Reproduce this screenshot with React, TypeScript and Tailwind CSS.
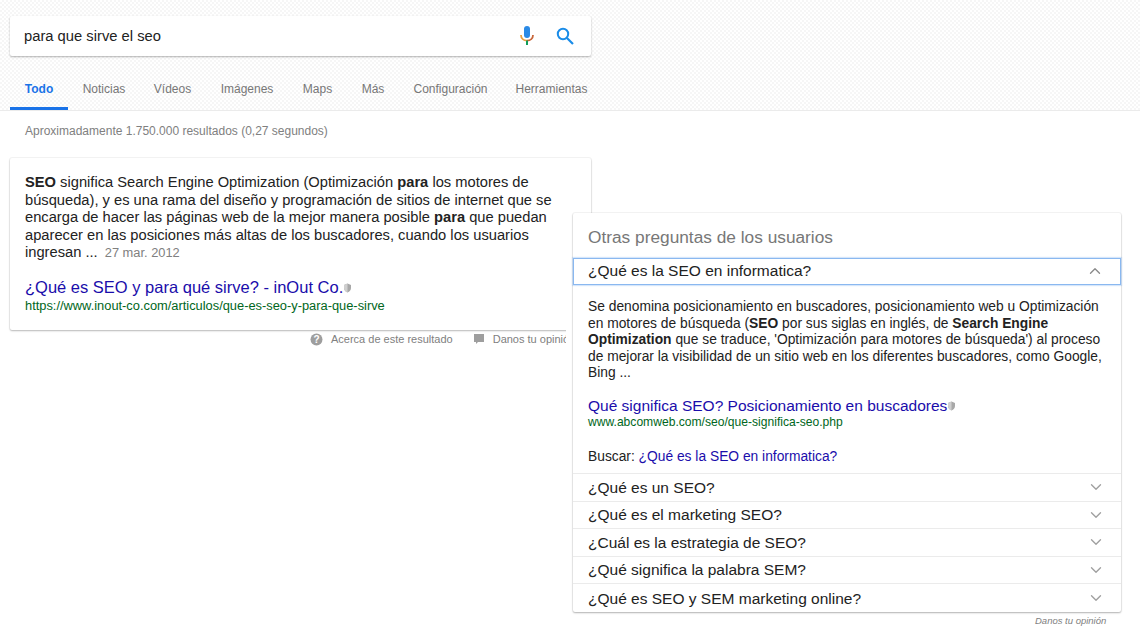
import React from "react";
import { ChevronDown, ChevronUp } from "lucide-react";

const font = "font-['Liberation_Sans',Arial,sans-serif]";

const tabs: [string, string][] = [
  ["Noticias", "w-[72px]"],
  ["Vídeos", "w-[65px]"],
  ["Imágenes", "w-[84px]"],
  ["Maps", "w-[57px]"],
  ["Más", "w-[54px]"],
  ["Configuración", "w-[101px]"],
  ["Herramientas", "w-[101px]"],
];

const questions = [
  "¿Qué es un SEO?",
  "¿Qué es el marketing SEO?",
  "¿Cuál es la estrategia de SEO?",
  "¿Qué significa la palabra SEM?",
  "¿Qué es SEO y SEM marketing online?",
];

function Shield() {
  return (
    <svg width="9" height="10" viewBox="0 0 9 10" className="inline-block align-baseline">
      <path d="M4.5 0.5 8 2v3c0 2.2-1.5 3.7-3.5 4.5C2.5 8.7 1 7.2 1 5V2z" fill="#a8a8a8" />
      <path d="M4.5 0.5 1 2v3c0 2.2 1.5 3.7 3.5 4.5z" fill="#cfcfcf" />
    </svg>
  );
}

export default function App() {
  return (
    <div className={`relative w-[1140px] h-[642px] overflow-hidden bg-white ${font}`}>
      <header className="h-[111px] bg-[conic-gradient(#f6f6f6_25%,#ffffff_0_50%,#f6f6f6_0_75%,#ffffff_0)] bg-[length:4px_4px] border-b border-[#ebebeb] pt-[16px] pl-[10px]">
        <div className="w-[581px] h-[40px] bg-white rounded-[2px] shadow-[0_1px_2px_rgba(0,0,0,0.3)] flex items-center pl-[14px] pr-[17px]">
          <span className="flex-1 text-[14.75px] text-[#222]">para que sirve el seo</span>
          <svg width="16" height="22" viewBox="0 0 16 22" className="mr-[21px]">
            <rect x="5" y="1" width="6" height="12" rx="3" fill="#2a8ae6" />
            <path d="M2 10c0 3.6 2.6 5.6 6 5.6" fill="none" stroke="#e8a040" strokeWidth="1.8" />
            <path d="M14 10c0 3.6-2.6 5.6-6 5.6" fill="none" stroke="#c8663a" strokeWidth="1.8" />
            <path d="M8 15.5V20" stroke="#0f9d58" strokeWidth="2" />
          </svg>
          <svg width="18" height="18" viewBox="0 0 18 18">
            <circle cx="7" cy="7" r="5.2" fill="none" stroke="#1a8ce8" strokeWidth="2" />
            <path d="M11 11l6 6" stroke="#1a8ce8" strokeWidth="2.2" />
          </svg>
        </div>
        <nav className="flex h-[54px] text-[12px] text-[#777]">
          <div className="w-[58px] h-[54px] flex items-center justify-center font-bold text-[#1a73e8] border-b-[3px] border-[#1a73e8] pt-[14px]">
            Todo
          </div>
          {tabs.map(([t, w]) => (
            <div key={t} className={`${w} flex items-center justify-center h-[54px] pt-[11px]`}>
              {t}
            </div>
          ))}
        </nav>
      </header>

      <main className="pl-[10px]">
        <p className="pl-[15px] pt-[12px] text-[12px] leading-[16px] text-[#808080]">
          Aproximadamente 1.750.000 resultados (0,27 segundos)
        </p>
        <section className="mt-[19px] w-[581px] h-[172px] bg-white rounded-[2px] shadow-[0_1px_2px_rgba(0,0,0,0.25),0_0_0_1px_rgba(0,0,0,0.04)] pl-[15px] pt-[16px] text-[14.7px] leading-[17.5px] text-[#222]">
          <p>
            <b>SEO</b> significa Search Engine Optimization (Optimización <b>para</b> los motores de
            <br />
            búsqueda), y es una rama del diseño y programación de sitios de internet que se
            <br />
            encarga de hacer las páginas web de la mejor manera posible <b>para</b> que puedan
            <br />
            aparecer en las posiciones más altas de los buscadores, cuando los usuarios
            <br />
            ingresan ... <span className="ml-[3px] text-[12.85px] text-[#808080]">27 mar. 2012</span>
          </p>
          <a className="block mt-[15px] text-[16.5px] leading-[20px] text-[#1a0dab]">
            ¿Qué es SEO y para qué sirve? - inOut Co.
            <Shield />
          </a>
          <p className="mt-[1px] text-[12.85px] leading-[16px] text-[#006621]">
            https://www.inout-co.com/articulos/que-es-seo-y-para-que-sirve
          </p>
        </section>
        <div className="w-[581px] mt-[1px] flex pl-[300px] items-center text-[11px] leading-[16px] text-[#808080] whitespace-nowrap">
          <svg width="13" height="13" viewBox="0 0 13 13" className="shrink-0 mr-[8px]">
            <circle cx="6.5" cy="6.5" r="6" fill="#9e9e9e" />
            <text x="6.5" y="10" textAnchor="middle" fontSize="10" fontWeight="700" fill="#fff" fontFamily="Liberation Sans">?</text>
          </svg>
          <span>Acerca de este resultado</span>
          <svg width="12" height="12" viewBox="0 0 12 12" className="shrink-0 ml-[20px] mr-[8px]">
            <path d="M1 1h10v8H5l-2 2V9H1z" fill="#9e9e9e" />
          </svg>
          <span>Danos tu opinión</span>
        </div>
      </main>

      <div className="absolute left-[566px] top-[213px] pl-[7px] bg-white">
        <aside className="w-[548px] bg-white rounded-[2px] shadow-[0_1px_2px_rgba(0,0,0,0.28),0_0_0_1px_rgba(0,0,0,0.04)]">
          <h3 className="h-[45px] pl-[15px] pt-[14px] text-[17.3px] leading-[20px] text-[#777]">
            Otras preguntas de los usuarios
          </h3>
          <div className="h-[27px] flex items-center justify-between pl-[14px] pr-[16px] pb-[2px] border border-[#8ab8f0] shadow-[0_0_1px_1px_rgba(138,184,240,0.35)] text-[15.5px] text-[#222]">
            <span>¿Qué es la SEO en informatica?</span>
            <ChevronUp size={18} strokeWidth={1.8} color="#8a8a8a" />
          </div>
          <div className="pl-[15px] pr-[10px] pt-[14px] text-[13.8px] leading-[16.5px] text-[#222] border-b border-[#ebebeb] h-[189px]">
            <p>
              Se denomina posicionamiento en buscadores, posicionamiento web u Optimización
              <br />
              en motores de búsqueda (<b>SEO</b> por sus siglas en inglés, de <b>Search Engine</b>
              <br />
              <b>Optimization</b> que se traduce, 'Optimización para motores de búsqueda') al proceso
              <br />
              de mejorar la visibilidad de un sitio web en los diferentes buscadores, como Google,
              <br />
              Bing ...
            </p>
            <a className="block mt-[15px] text-[15.5px] leading-[17px] text-[#1a0dab]">
              Qué significa SEO? Posicionamiento en buscadores
              <Shield />
            </a>
            <p className="mt-[1px] text-[12.1px] leading-[15px] text-[#006621]">www.abcomweb.com/seo/que-significa-seo.php</p>
            <p className="mt-[19px] leading-[16px]">
              Buscar: <a className="text-[#1a0dab]">¿Qué es la SEO en informatica?</a>
            </p>
          </div>
          {questions.map((q, i) => (
            <div
              key={q}
              className={`h-[27.6px] flex items-center justify-between pl-[15px] pr-[16px] text-[15.5px] text-[#222] ${
                i < questions.length - 1 ? "border-b border-[#ebebeb]" : ""
              }`}
            >
              <span>{q}</span>
              <ChevronDown size={18} strokeWidth={1.8} color="#a0a0a0" />
            </div>
          ))}
        </aside>
      </div>
      <p className="absolute left-[1035px] top-[614px] text-[9.5px] leading-[14px] italic text-[#808080]">Danos tu opinión</p>
    </div>
  );
}
